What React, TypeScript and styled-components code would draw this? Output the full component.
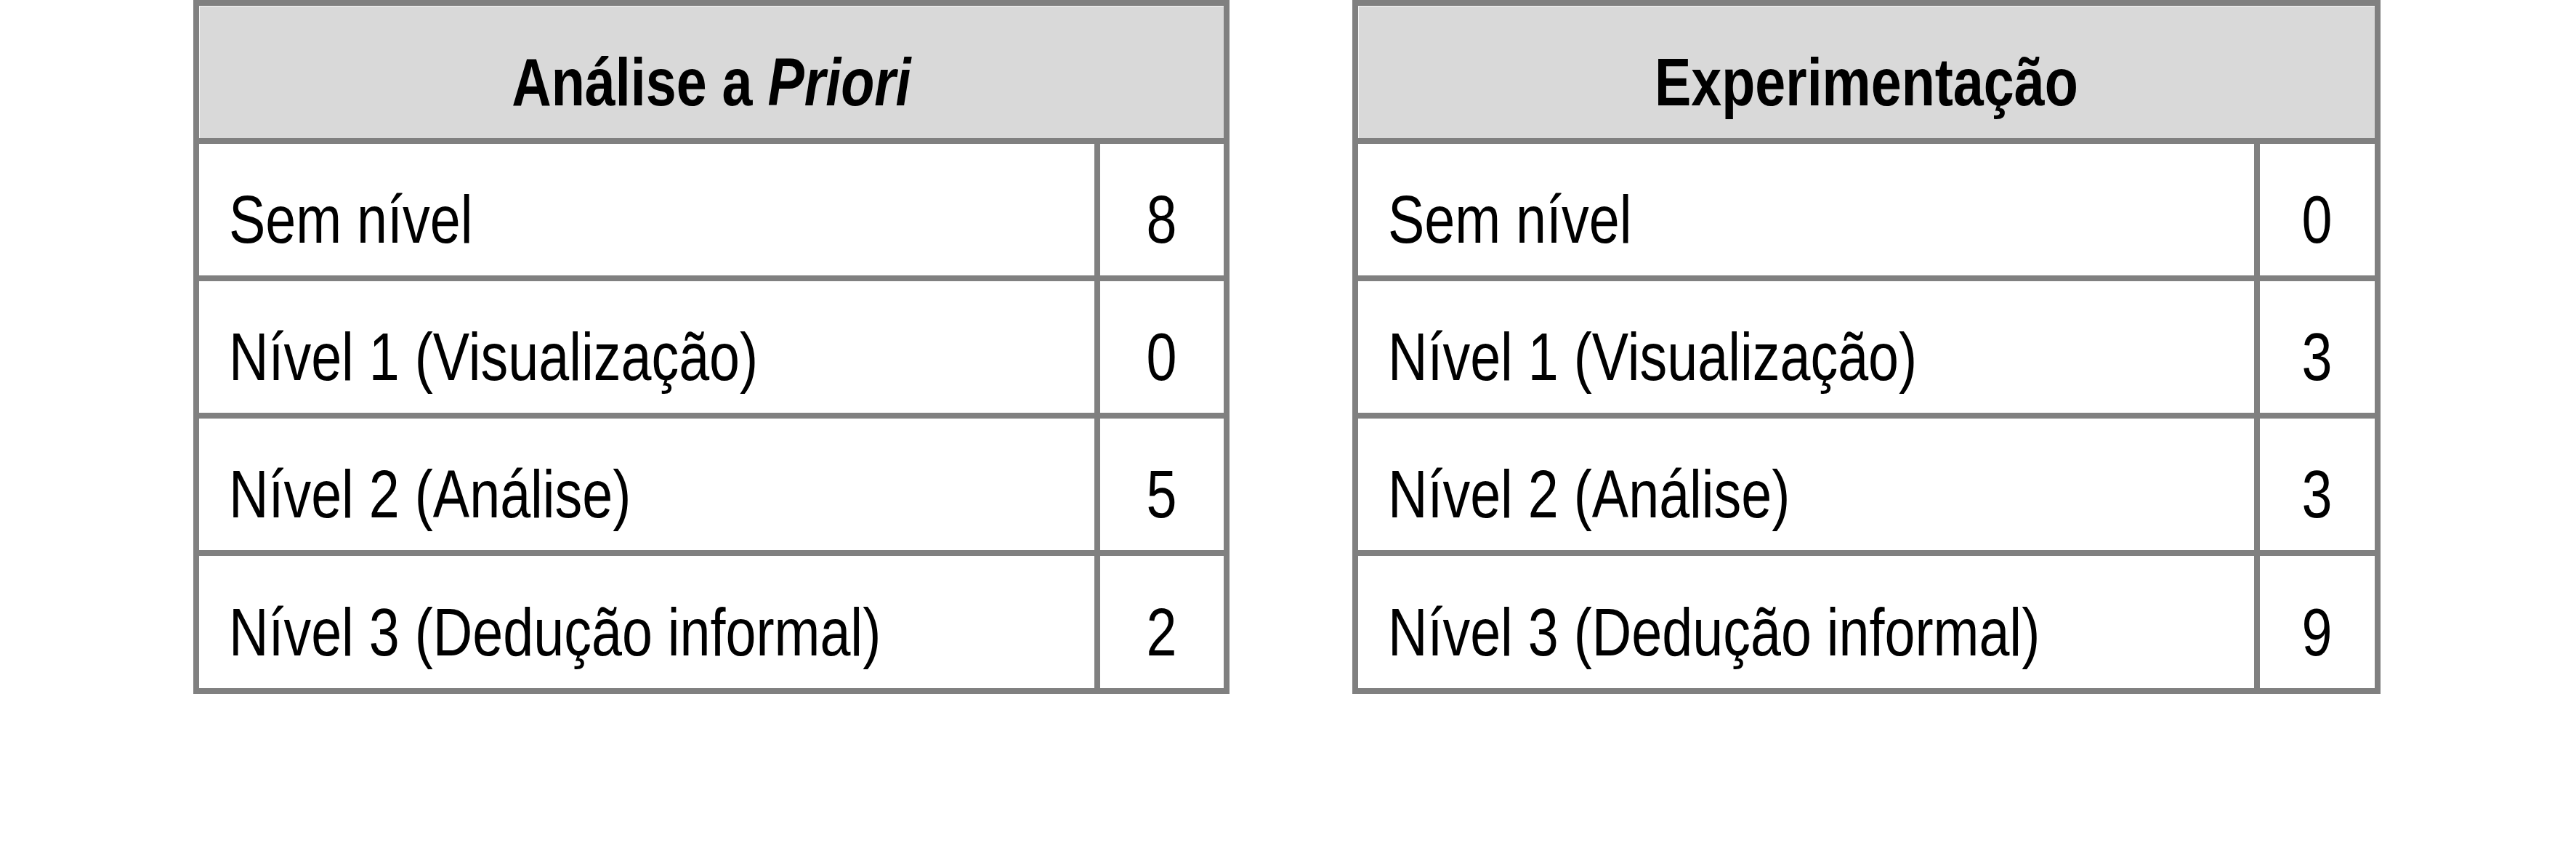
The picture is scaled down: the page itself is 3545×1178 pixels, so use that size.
import React from "react";
import styled, { createGlobalStyle } from "styled-components";

const GlobalStyle = createGlobalStyle`
  html, body {
    margin: 0;
    padding: 0;
    background: #ffffff;
  }
  body {
    font-family: "Liberation Sans Narrow", "Arial Narrow", "Liberation Sans", Arial, sans-serif;
    color: #000000;
  }
`;

const Page = styled.div`
  width: 3545px;
  height: 1178px;
  box-sizing: border-box;
  padding-left: 266px;
  display: flex;
  align-items: flex-start;
  gap: 169px;
  background: #ffffff;
`;

const Table = styled.div<{ $labelWidth: number; $numWidth: number }>`
  display: grid;
  grid-template-columns: ${(p) => p.$labelWidth}px ${(p) => p.$numWidth}px;
  grid-template-rows: 182px 181px 181px 181px 182px;
  gap: 8px;
  padding: 8px;
  background: #808080;
`;

const HeaderCell = styled.div`
  grid-column: 1 / span 2;
  background: #d9d9d9;
  box-shadow: inset 1px 1px 0 #f4f4f4;
  display: flex;
  align-items: center;
  justify-content: center;
  box-sizing: border-box;
  padding-top: 28px;
  font-size: 92px;
  font-weight: 700;
  line-height: normal;
  white-space: nowrap;
`;

const LabelCell = styled.div`
  background: #ffffff;
  display: flex;
  align-items: center;
  box-sizing: border-box;
  padding-top: 28px;
  padding-left: 41px;
  font-size: 92px;
  line-height: normal;
  white-space: nowrap;
`;

const NumberCell = styled(LabelCell)`
  justify-content: center;
  padding-left: 0;
`;

/* Narrow rendering: Arial Narrow is Arial at 82% width */
const Narrow = styled.span<{ $origin?: string }>`
  display: inline-block;
  transform: scaleX(0.82);
  transform-origin: ${(p) => p.$origin ?? "left"} center;
`;

const Emph = styled.em`
  font-style: italic;
`;

type Row = { label: string; value: number };

const Block: React.FC<{
  title: React.ReactNode;
  rows: Row[];
  labelWidth: number;
  numWidth: number;
}> = ({ title, rows, labelWidth, numWidth }) => (
  <Table $labelWidth={labelWidth} $numWidth={numWidth}>
    <HeaderCell>
      <Narrow $origin="center">{title}</Narrow>
    </HeaderCell>
    {rows.map((r) => (
      <React.Fragment key={r.label}>
        <LabelCell>
          <Narrow>{r.label}</Narrow>
        </LabelCell>
        <NumberCell>
          <Narrow $origin="center">{r.value}</Narrow>
        </NumberCell>
      </React.Fragment>
    ))}
  </Table>
);

const priori: Row[] = [
  { label: "Sem nível", value: 8 },
  { label: "Nível 1 (Visualização)", value: 0 },
  { label: "Nível 2 (Análise)", value: 5 },
  { label: "Nível 3 (Dedução informal)", value: 2 },
];

const experimento: Row[] = [
  { label: "Sem nível", value: 0 },
  { label: "Nível 1 (Visualização)", value: 3 },
  { label: "Nível 2 (Análise)", value: 3 },
  { label: "Nível 3 (Dedução informal)", value: 9 },
];

export default function App() {
  return (
    <>
      <GlobalStyle />
      <Page>
        <Block
          title={
            <>
              Análise a <Emph>Priori</Emph>
            </>
          }
          rows={priori}
          labelWidth={1232}
          numWidth={170}
        />
        <Block
          title="Experimentação"
          rows={experimento}
          labelWidth={1233}
          numWidth={158}
        />
      </Page>
    </>
  );
}
